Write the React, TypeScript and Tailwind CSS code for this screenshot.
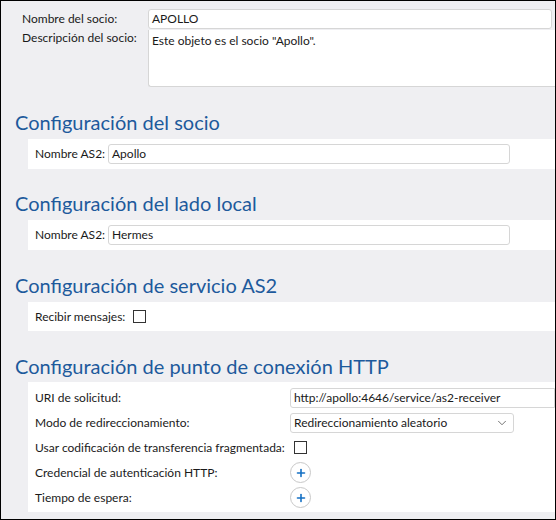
import { ChevronDown, Plus } from "lucide-react";

const font = { fontFamily: "Lato, 'Noto Sans', sans-serif" };

function Heading({ children }: { children: React.ReactNode }) {
  return (
    <h2 className="pl-[14px] text-[20px] leading-[26px] text-[#1d5a9c]">
      {children}
    </h2>
  );
}

function TextBox({ value, className }: { value: string; className?: string }) {
  return (
    <div
      className={
        "flex h-[20px] items-center rounded-[3px] border border-[#d6d6d6] bg-white pl-[3px] text-[12px] text-[#1a1a1a] " +
        (className ?? "")
      }
    >
      {value}
    </div>
  );
}

function CheckBox() {
  return <div className="h-[13px] w-[13px] border border-[#333] bg-white" />;
}

function AddButton() {
  return (
    <div className="flex h-[21px] w-[21px] items-center justify-center rounded-full border border-[#c8c8c8] bg-white">
      <Plus size={12} strokeWidth={3.2} className="text-[#1470c4]" />
    </div>
  );
}

function HttpRow({ label, children }: { label: string; children: React.ReactNode }) {
  return (
    <div className="grid h-[25px] grid-cols-[255px_1fr] items-center">
      <span>{label}</span>
      <div className="flex items-center">{children}</div>
    </div>
  );
}

export default function App() {
  return (
    <div
      style={font}
      className="h-[520px] w-[556px] overflow-hidden border border-black bg-[#efeff2] text-[12px] text-[#1a1a1a]"
    >
      {/* partner header */}
      <div className="grid grid-cols-[126px_1fr] gap-y-[1px] pl-[21px] pt-[8px]">
        <span className="leading-[19px]">Nombre del socio:</span>
        <TextBox value="APOLLO" className="mr-[3px] h-[19px]" />
        <span className="leading-[16px]">Descripción del socio:</span>
        <div className="-mr-[4px] h-[57px] rounded-bl-[3px] border-b border-l border-[#d6d6d6] bg-white pl-[3px] pt-[2px]">
          Este objeto es el socio "Apollo".
        </div>
      </div>

      <div className="mt-[22px]">
        <Heading>Configuración del socio</Heading>
      </div>
      <div className="ml-[27px] mt-[4px] flex h-[30px] items-center bg-white pl-[7px]">
        <span className="w-[73px]">Nombre AS2:</span>
        <TextBox value="Apollo" className="w-[402px]" />
      </div>

      <div className="mt-[21px]">
        <Heading>Configuración del lado local</Heading>
      </div>
      <div className="ml-[27px] mt-[4px] flex h-[30px] items-center bg-white pl-[7px]">
        <span className="w-[73px]">Nombre AS2:</span>
        <TextBox value="Hermes" className="w-[402px]" />
      </div>

      <div className="mt-[22px]">
        <Heading>Configuración de servicio AS2</Heading>
      </div>
      <div className="ml-[27px] mt-[4px] flex h-[29px] items-center bg-white pl-[7px]">
        <span className="w-[98px]">Recibir mensajes:</span>
        <CheckBox />
      </div>

      <div className="mt-[22px]">
        <Heading>Configuración de punto de conexión HTTP</Heading>
      </div>
      <div className="ml-[27px] mt-[3px] bg-white pb-[2px] pl-[7px] pt-[3px]">
        <HttpRow label="URI de solicitud:">
          <TextBox value="http://apollo:4646/service/as2-receiver" className="-mr-[4px] w-full rounded-r-none" />
        </HttpRow>
        <HttpRow label="Modo de redireccionamiento:">
          <div className="flex h-[20px] w-[224px] items-center justify-between rounded-[3px] border border-[#d6d6d6] bg-white pl-[3px] pr-[4px]">
            <span>Redireccionamiento aleatorio</span>
            <ChevronDown size={14} strokeWidth={1.4} className="text-[#555]" />
          </div>
        </HttpRow>
        <HttpRow label="Usar codificación de transferencia fragmentada:">
          <div className="pl-[4px]">
            <CheckBox />
          </div>
        </HttpRow>
        <HttpRow label="Credencial de autenticación HTTP:">
          <AddButton />
        </HttpRow>
        <HttpRow label="Tiempo de espera:">
          <AddButton />
        </HttpRow>
      </div>
    </div>
  );
}
